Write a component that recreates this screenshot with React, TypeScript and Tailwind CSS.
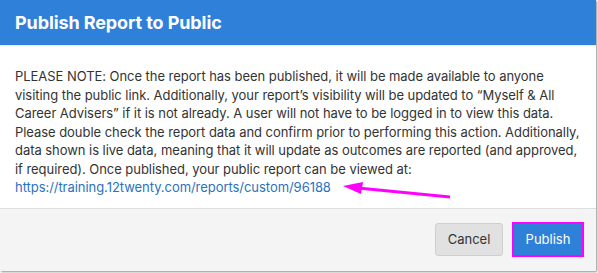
import React from "react";

export default function App() {
  return (
    <div className="relative w-[598px] h-[273px] bg-white overflow-hidden" style={{ fontFamily: "Inter, 'Noto Sans', sans-serif" }}>
      <div className="w-[596px] h-[271px] flex flex-col shadow-[1px_1px_2px_rgba(0,0,0,0.45)]">
        <div className="h-[46px] bg-[#2f80d9] flex items-center px-[15px] border-b border-[#e6edf5]">
          <h1 className="text-white font-bold text-[18px] tracking-[-0.1px]">Publish Report to Public</h1>
        </div>
        <div className="px-[15px] pt-[21px] pb-[11px] text-[13px] leading-[18.5px] text-[#333] tracking-[-0.05px]">
          PLEASE NOTE: Once the report has been published, it will be made available to anyone visiting the public link. Additionally, your report&rsquo;s visibility will be updated to &ldquo;Myself &amp; All Career Advisers&rdquo; if it is not already. A user will not have to be logged in to view this data. Please double check the report data and confirm prior to performing this action. Additionally, data shown is live data, meaning that it will update as outcomes are reported (and approved, if required). Once published, your public report can be viewed at:
          <br />
          <a className="text-[#2a72c0]">https://training.12twenty.com/reports/custom/96188</a>
        </div>
        <div className="flex-1 bg-[#f4f4f4] border-t border-[#dedede] flex items-center justify-end gap-[9px] pr-[12px]">
          <button className="h-[33px] w-[68px] rounded-[3px] bg-[#e1e1e1] border border-[#cfcfcf] text-[#333] text-[13px]">Cancel</button>
          <button className="h-[35px] w-[72px] bg-[#2f80d9] border-2 border-[#ff00ff] text-white text-[13px]">Publish</button>
        </div>
      </div>
      <svg className="absolute left-0 top-0 pointer-events-none" width="598" height="273">
        <line x1="358" y1="188" x2="450" y2="197" stroke="#ff00ff" strokeWidth="3" />
        <polygon points="343,186 363,182 361,194" fill="#ff00ff" />
      </svg>
    </div>
  );
}
